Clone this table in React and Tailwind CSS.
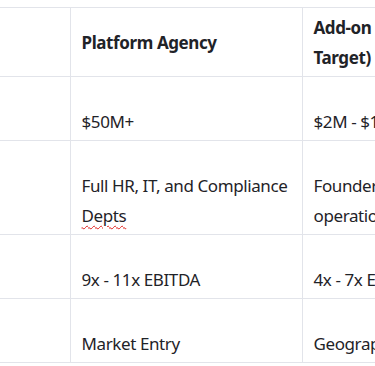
const rows = [
  { a: "$50M+", b: "$2M - $10M" },
  { a: "Full HR, IT, and Compliance Depts", b: "Founder-dependent operations", wavy: true },
  { a: "9x - 11x EBITDA", b: "4x - 7x EBITDA" },
  { a: "Market Entry", b: "Geographic Expansion" },
];

export default function App() {
  return (
    <div className="h-[366px] w-[375px] overflow-hidden bg-white pt-[7px] font-['Noto_Sans',sans-serif] text-[#1f2328]">
      <table className="w-[510px] table-fixed border-collapse text-[17px] leading-[30px] tracking-[-0.4px]">
        <colgroup>
          <col className="w-[70px]" />
          <col className="w-[232px]" />
          <col className="w-[208px]" />
        </colgroup>
        <thead>
          <tr>
            <th className="border-y border-r border-[#e2e4ea]" />
            <th className="border border-[#e2e4ea] px-[11px] pt-[5px] pb-[3px] text-left align-middle font-bold">
              Platform Agency
            </th>
            <th className="border border-[#e2e4ea] px-[11px] pt-[5px] pb-[3px] text-left align-middle font-bold">
              Add-on (Acquisition Target)
            </th>
          </tr>
        </thead>
        <tbody>
          {rows.map((row, i) => (
            <tr key={i}>
              <td className="border-y border-r border-[#e2e4ea]" />
              <td className="border border-[#e2e4ea] px-[11px] pt-[30px] pb-[3px] align-top">
                {row.wavy ? (
                  <>
                    Full HR, IT, and Compliance{" "}
                    <span className="underline decoration-[#e0201c] decoration-wavy decoration-1 underline-offset-[3px]">
                      Depts
                    </span>
                  </>
                ) : (
                  row.a
                )}
              </td>
              <td className="border border-[#e2e4ea] px-[11px] pt-[30px] pb-[3px] align-top">{row.b}</td>
            </tr>
          ))}
        </tbody>
      </table>
    </div>
  );
}
